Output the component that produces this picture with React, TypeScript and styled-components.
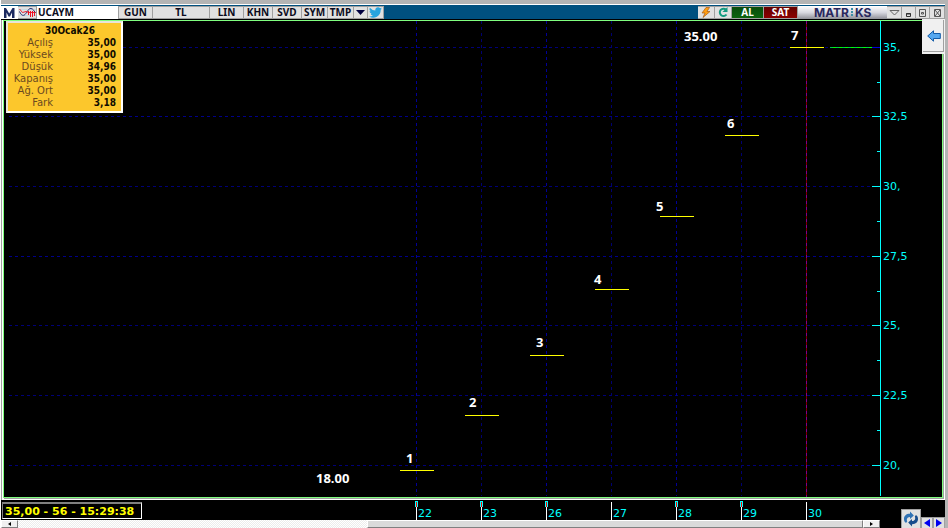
import React from "react";
import styled, { createGlobalStyle } from "styled-components";

const Global = createGlobalStyle`
  * { box-sizing: border-box; }
  html, body, #root { height: 100%; }
  body { margin: 0; background: #b4b4b4; font-family: "DejaVu Sans", Verdana, sans-serif; font-size: 11px; overflow: hidden; }
  button, input { font: inherit; border-radius: 0; }
`;

const Window = styled.main`
  height: 100vh;
  display: flex;
  flex-direction: column;
  padding: 4px 3px 0 0;
  border-left: 1px solid #fff;
`;

const Frame = styled.div`
  flex: 1;
  min-height: 0;
  display: flex;
  flex-direction: column;
  background: #fff;
  padding-top: 1px;
`;

const Toolbar = styled.header`
  display: flex;
  height: 15px;
  background: #00507f;
  border-top: 1px solid #00507f;
  border-bottom: 1px solid #000;
`;

const ToolButton = styled.button<{ $w: number; $tone?: string; $ink?: string }>`
  display: flex;
  align-items: center;
  justify-content: center;
  flex: none;
  width: ${(p) => p.$w}px;
  padding: 0;
  border: 1px solid #a0a0a0;
  border-width: 1px 1px 1px 0;
  background: ${(p) => p.$tone ?? "#e1e1e1"};
  color: ${(p) => p.$ink ?? "#0c0c20"};
  font-family: "Noto Sans", Tahoma, sans-serif;
  font-size: 10px;
  font-weight: 700;
  line-height: 11px;
  white-space: nowrap;
`;

const LogoButton = styled(ToolButton)`
  border-color: #fff;
`;

const SymbolInput = styled.input`
  width: 82px;
  min-width: 0;
  padding: 0 1px;
  border: 0;
  border-right: 1px solid #a0a0a0;
  background: #fff;
  color: #0c0c20;
  font-family: "Noto Sans", Tahoma, sans-serif;
  font-size: 10px;
  line-height: 13px;
  font-weight: 700;
  outline: 0;
`;

const Spacer = styled.div`
  flex: 1;
`;

const Brand = styled.div`
  display: flex;
  align-items: center;
  justify-content: center;
  width: 89px;
  background: linear-gradient(#fff, #d8d8e0 50%, #909098);
`;

const PaneWrap = styled.div`
  position: relative;
  flex: 1;
  min-height: 0;
  display: flex;
  padding: 0 2px 2px 1px;
  border-left: 1px solid #a0a0a0;
`;

const ChartPane = styled.section`
  flex: 1;
  min-width: 0;
  min-height: 0;
  display: flex;
  background: #000;
  border: 1px solid #80ff80;
  box-shadow: 1px 1px 0 #a0a0a0;
`;

const Plot = styled.svg`
  flex: 1;
  min-width: 0;
  width: 100%;
  height: 100%;
`;

const InfoBox = styled.aside`
  position: absolute;
  top: 1px;
  left: 4px;
  width: 117px;
  padding: 2px 5px 2px 4px;
  border: 2px solid #fff;
  border-top-color: #e8e4da;
  border-left-color: #e8e4da;
  background: #fcc72c;
  color: #100c00;
`;

const InfoTable = styled.table`
  width: 100%;
  border-collapse: collapse;
  font-size: 10px;
  line-height: 12px;

  caption, td { font-family: "DejaVu Sans Condensed", "DejaVu Sans", sans-serif; font-stretch: normal; font-weight: 700; }
  caption { height: 12px; padding-left: 12px; }
  th, td { padding: 0; text-align: right; height: 12px; }
  th { width: 41px; font-weight: 400; color: #6b4a20; white-space: nowrap; }
`;

const BackButton = styled.button`
  position: absolute;
  top: -1px;
  right: 0;
  display: flex;
  align-items: center;
  justify-content: center;
  width: 23px;
  height: 35px;
  padding: 0;
  border: 1px solid #f0f0f0;
  border-width: 1px 1px 2px 1px;
  box-shadow: inset -1px -1px 0 #a0a0a0;
  background: #f0f0f0;
`;

const Footer = styled.footer`
  display: flex;
  height: 28px;
  background: #000;
`;

const FooterMain = styled.div`
  flex: 1;
  min-width: 0;
  display: flex;
  flex-direction: column;
`;

const DateRow = styled.div`
  position: relative;
  display: flex;
  height: 20px;
`;

const Status = styled.output`
  position: absolute;
  top: 2px;
  left: 1px;
  width: 140px;
  height: 17px;
  padding-left: 2px;
  border: 1px solid #fff;
  border-top: 2px solid #808080;
  border-left-color: #808080;
  color: #ff0;
  font-size: 11px;
  line-height: 15px;
  font-weight: 700;
  white-space: nowrap;
`;

const Scrollbar = styled.div`
  display: flex;
  height: 8px;
  margin-right: 21px;
  background: repeating-conic-gradient(#fff 0 25%, #ececec 0 50%) 0 0 / 2px 2px;
`;

const ScrollArrow = styled.button`
  display: flex;
  align-items: center;
  justify-content: center;
  width: 17px;
  padding: 0;
  border: 1px solid #fff;
  border-right-color: #808080;
  border-bottom-color: #808080;
  background: #f0f0f0;
`;

const ScrollSpace = styled.div`
  flex: 349;
`;

const Thumb = styled.div`
  flex: 495;
  border: 1px solid #fff;
  border-right-color: #808080;
  border-bottom-color: #808080;
  background: #dadada;
`;

const FooterTools = styled.div`
  display: flex;
  align-items: flex-end;
  width: 44px;
`;

const FootButton = styled.button<{ $w: number; $h: number }>`
  display: flex;
  align-items: center;
  justify-content: center;
  width: ${(p) => p.$w}px;
  height: ${(p) => p.$h}px;
  padding: 0;
  border: 1px solid #a0a0a0;
  border-bottom: 0;
  background: #e1e1e1;
`;

const ChartLabel = styled.text<{ $white?: boolean }>`
  fill: ${(p) => (p.$white ? "#fff" : "#00ffff")};
  font-family: ${(p) => (p.$white ? '"Noto Sans", sans-serif' : '"DejaVu Sans", sans-serif')};
  font-size: ${(p) => (p.$white ? 13 : 11)}px;
  font-weight: ${(p) => (p.$white ? 700 : 400)};
`;

const BrandSvg = styled.svg`
  overflow: visible;

  text { fill: #2a285e; font-family: Inter, sans-serif; font-size: 12px; font-weight: 700; }
`;

const quote = [
  ["Açılış", "35,00"],
  ["Yüksek", "35,00"],
  ["Düşük", "34,96"],
  ["Kapanış", "35,00"],
  ["Ağ. Ort", "35,00"],
  ["Fark", "3,18"],
];

const prices = [
  { y: 47, text: "35," },
  { y: 116, text: "32,5" },
  { y: 186, text: "30," },
  { y: 256, text: "27,5" },
  { y: 325, text: "25," },
  { y: 395, text: "22,5" },
  { y: 465, text: "20," },
];

const days = [
  { x: 416, text: "22", bright: true, tag: true },
  { x: 481, text: "23", bright: false, tag: true },
  { x: 546, text: "26", bright: true, tag: true },
  { x: 611, text: "27", bright: false, tag: false },
  { x: 676, text: "28", bright: true, tag: true },
  { x: 741, text: "29", bright: false, tag: true },
  { x: 806, text: "30", bright: false, tag: false },
];

const bars = [
  { x: 400, y: 470, n: "1", nx: 406, ny: 463 },
  { x: 465, y: 415, n: "2", nx: 469, ny: 407 },
  { x: 530, y: 355, n: "3", nx: 536, ny: 347 },
  { x: 595, y: 289, n: "4", nx: 594, ny: 284 },
  { x: 660, y: 216, n: "5", nx: 656, ny: 211 },
  { x: 725, y: 135, n: "6", nx: 727, ny: 128 },
  { x: 790, y: 47, n: "7", nx: 791, ny: 40 },
];

function PriceChart() {
  return (
    <Plot viewBox="4 21 938 476" preserveAspectRatio="xMaxYMin meet" role="img" aria-label="UCAYM">
      <g shapeRendering="crispEdges">
        {prices.map((p) => (
          <path key={p.text} d={`M9 ${p.y}.5H871`} stroke={p.y === 256 || p.y === 116 ? "#00008b" : "#000078"} strokeDasharray="3 3" />
        ))}
        {days.slice(0, 6).map((d) => (
          <path key={d.x} d={`M${d.x}.5 21V496`} stroke={d.bright ? "#000098" : "#000070"} strokeDasharray="3 3" />
        ))}
        <path d="M806.5 21V497" stroke="#800000" />
        <path d="M806.5 21V497" stroke="#80008c" strokeDasharray="3 3" />
        <path d="M880.5 21V496" stroke="#00ffff" />
        {prices.map((p) => (
          <path key={p.y} d={`M872 ${p.y}.5H880`} stroke={p.y === 47 ? "#0000e0" : "#00ffff"} />
        ))}
        {[82, 151, 221, 291, 360, 430].map((y) => (
          <path key={y} d={`M877 ${y}.5H880`} stroke="#00ffff" />
        ))}
        {bars.map((b) => (
          <path key={b.n} d={`M${b.x} ${b.y}.5h34`} stroke="#ffff00" />
        ))}
        <path d="M830 47.5H872" stroke="#00ff00" />
        <path d="M830 47.5H872" stroke="#00c850" strokeDasharray="3 3" />
      </g>
      {prices.map((p) => (
        <ChartLabel key={p.text} x={883} y={p.y + 4}>{p.text}</ChartLabel>
      ))}
      {bars.map((b) => (
        <ChartLabel $white key={b.n} x={b.nx} y={b.ny}>{b.n}</ChartLabel>
      ))}
      <ChartLabel $white x={684} y={41}>35.00</ChartLabel>
      <ChartLabel $white x={316} y={483}>18.00</ChartLabel>
    </Plot>
  );
}

function DateAxis() {
  return (
    <Plot viewBox="1 500 900 20" preserveAspectRatio="xMaxYMin meet">
      <g shapeRendering="crispEdges">
        {days.map((d) => (
          <g key={d.x}>
            <path d={`M${d.x}.5 502V520`} stroke="#fff" />
            {d.tag && <rect x={d.x - 1} y={501} width={3} height={6} fill="#00ffff" />}
            {d.tag && <path d={`M${d.x}.5 502V507`} stroke="#f00" />}
          </g>
        ))}
      </g>
      {days.map((d) => (
        <ChartLabel key={d.text} x={d.x + 2} y={517}>{d.text}</ChartLabel>
      ))}
    </Plot>
  );
}

const Tri = ({ d, color = "#000", w = 5, h = 5 }: { d: string; color?: string; w?: number; h?: number }) => (
  <svg width={w} height={h} viewBox={`0 0 ${w} ${h}`} aria-hidden="true"><path d={d} fill={color} /></svg>
);

function MarkIcon() {
  return (
    <svg width="12" height="11" viewBox="0 0 12 11" aria-hidden="true">
      <path d="M1 11V1H3L6.200 6.500L9.500 1H11.500V11H9V5.500L7 9.500H5.500L3.500 5.500V11Z" fill="#1b2a60" />
    </svg>
  );
}

function WaveIcon() {
  return (
    <svg width="17" height="11" viewBox="0 0 17 11" aria-hidden="true">
      <path d="M0 2.500H17M0 5.500H17M0 8.500H17" stroke="#b4d4e4" strokeWidth=".6" />
      <path d="M9.500 4V8M11.500 4V10M13.500 4V10M15.500 4V9" stroke="#f01020" shapeRendering="crispEdges" />
      <path d="M.5 4.500C2 8 4 9.500 6 7.500S9.500 1 12 1.500S15 4 16.500 6" fill="none" stroke="#28286c" />
      <path d="M.5 2L3.500 5.500L7 4.500L9.500 5.500H16.500" fill="none" stroke="#f01020" strokeWidth=".9" />
    </svg>
  );
}

function BirdIcon() {
  return (
    <svg width="13" height="11" viewBox="0 2 24 20" aria-hidden="true">
      <path d="M24 4.600a10 10 0 0 1-2.800.8 5 5 0 0 0 2.100-2.700 10 10 0 0 1-3.100 1.200 4.900 4.900 0 0 0-8.400 4.500A14 14 0 0 1 1.700 3.200a4.900 4.900 0 0 0 1.500 6.500A5 5 0 0 1 1 9.100a4.900 4.900 0 0 0 4 4.900 5 5 0 0 1-2.300.1 4.900 4.900 0 0 0 4.600 3.400A10 10 0 0 1 0 19.500 14 14 0 0 0 21.500 7a10 10 0 0 0 2.500-2.400Z" fill="#28a4de" />
    </svg>
  );
}

function BoltIcon() {
  return (
    <svg width="10" height="11" viewBox="0 0 10 11" aria-hidden="true">
      <path d="M5 .5L1 6H4L2 10.500L9 4.500H6L8.500 .5Z" fill="#ff9d10" stroke="#a85a18" strokeWidth=".7" />
    </svg>
  );
}

function ReloadIcon() {
  return (
    <svg width="10" height="11" viewBox="0 0 10 11" aria-hidden="true">
      <path d="M8 2.600A3.700 3.700 0 1 0 8.500 7.500" fill="none" stroke="#149a80" strokeWidth="2" />
      <path d="M9.500 0V5H4.500Z" fill="#149a80" />
    </svg>
  );
}

function BrandLogo() {
  return (
    <BrandSvg width="58" height="11" viewBox="0 0 58 11" role="img" aria-label="MATRIKS">
      <text x="0" y="10">MATR</text>
      <text x="41" y="10">KS</text>
      <path d="M38 1V10" stroke="#3e8fa8" strokeWidth="2" strokeDasharray="2 1" />
    </BrandSvg>
  );
}

function WindowIcon({ kind }: { kind: "down" | "min" | "max" | "close" }) {
  return (
    <svg width="11" height="10" viewBox="0 0 11 10" fill="none" stroke="#666" aria-hidden="true">
      {kind === "down" && <path d="M1 2.500H10L5.500 7Z" />}
      {kind === "min" && <path d="M3.500 5.500H7.500V8.500H3.500ZM3 6H8" stroke="#333" />}
      {kind === "max" && <path d="M2.500 1.500H8.500V8.500H2.500ZM4.500 4.500H6.500V6H4.500Z" stroke="#555" />}
      {kind === "close" && <path d="M2.500 1.500H8.500V8.500H2.500ZM3 2L8 8M8 2L3 8" stroke="#555" />}
    </svg>
  );
}

function SyncIcon() {
  return (
    <svg width="16" height="16" viewBox="0 0 16 16" aria-hidden="true">
      <path d="M1.500 10.500C-.2 6 2.500 2.600 7 2.800V.5L10.800 4.400L7 8V6C4.600 6 3 8 4.200 10.500L3 12Z" fill="#2f72b4" />
      <path d="M14.500 5.500C16.200 10 13.500 13.400 9 13.200V15.500L5.200 11.600L9 8V10C11.400 10 13 8 11.800 5.500L13 4Z" fill="#164c8c" />
    </svg>
  );
}

export default function App() {
  return (
    <>
      <Global />
      <Window>
        <Frame>
          <Toolbar>
            <LogoButton $w={17} $tone="#fff" aria-label="Matriks"><MarkIcon /></LogoButton>
            <ToolButton $w={19} aria-label="Grafik"><WaveIcon /></ToolButton>
            <SymbolInput defaultValue="UCAYM" aria-label="Sembol" />
            <ToolButton $w={34}>GUN</ToolButton>
            <ToolButton $w={57}>TL</ToolButton>
            <ToolButton $w={34}>LIN</ToolButton>
            <ToolButton $w={29}>KHN</ToolButton>
            <ToolButton $w={29}>SVD</ToolButton>
            <ToolButton $w={26}>SYM</ToolButton>
            <ToolButton $w={26}>TMP</ToolButton>
            <ToolButton $w={14} aria-label="Menü"><Tri w={9} h={5} d="M0 0H9L4.500 5Z" color="#000040" /></ToolButton>
            <ToolButton $w={16} aria-label="Twitter"><BirdIcon /></ToolButton>
            <Spacer />
            <ToolButton $w={17} aria-label="Hızlı emir"><BoltIcon /></ToolButton>
            <ToolButton $w={17} aria-label="Yenile"><ReloadIcon /></ToolButton>
            <ToolButton $w={32} $tone="linear-gradient(#0a4c0c, #0b640e)" $ink="#fff">AL</ToolButton>
            <ToolButton $w={34} $tone="linear-gradient(#640000, #8c0000)" $ink="#fff">SAT</ToolButton>
            <Brand><BrandLogo /></Brand>
            <ToolButton $w={15} aria-label="Daralt"><WindowIcon kind="down" /></ToolButton>
            <ToolButton $w={14} aria-label="Küçült"><WindowIcon kind="min" /></ToolButton>
            <ToolButton $w={14} aria-label="Büyüt"><WindowIcon kind="max" /></ToolButton>
            <ToolButton $w={15} aria-label="Kapat"><WindowIcon kind="close" /></ToolButton>
          </Toolbar>
          <PaneWrap>
            <ChartPane>
              <PriceChart />
            </ChartPane>
            <InfoBox>
              <InfoTable>
                <caption>30Ocak26</caption>
                <tbody>
                  {quote.map(([k, v]) => (
                    <tr key={k}><th scope="row">{k}</th><td>{v}</td></tr>
                  ))}
                </tbody>
              </InfoTable>
            </InfoBox>
            <BackButton aria-label="Geri">
              <svg width="14" height="12" viewBox="0 0 14 12" aria-hidden="true">
                <path d="M.7 6L6.500 .8V3.500H13.300V8.500H6.500V11.200Z" fill="#56a8f0" stroke="#145ca8" />
              </svg>
            </BackButton>
          </PaneWrap>
          <Footer>
            <FooterMain>
              <DateRow>
                <DateAxis />
                <Status>35,00 - 56 - 15:29:38</Status>
              </DateRow>
              <Scrollbar>
                <ScrollArrow aria-label="Sola"><Tri w={3} h={4} d="M3 0V4L0 2Z" /></ScrollArrow>
                <ScrollSpace />
                <Thumb />
                <ScrollArrow aria-label="Sağa"><Tri w={3} h={4} d="M0 0V4L3 2Z" /></ScrollArrow>
              </Scrollbar>
            </FooterMain>
            <FooterTools>
              <FootButton $w={20} $h={19} aria-label="Güncelle"><SyncIcon /></FootButton>
              <FootButton $w={12} $h={11} aria-label="Önceki"><Tri w={6} h={8} d="M6 0V8L0 4Z" color="#0000f0" /></FootButton>
              <FootButton $w={12} $h={11} aria-label="Sonraki"><Tri w={6} h={8} d="M0 0V8L6 4Z" color="#0000f0" /></FootButton>
            </FooterTools>
          </Footer>
        </Frame>
      </Window>
    </>
  );
}
